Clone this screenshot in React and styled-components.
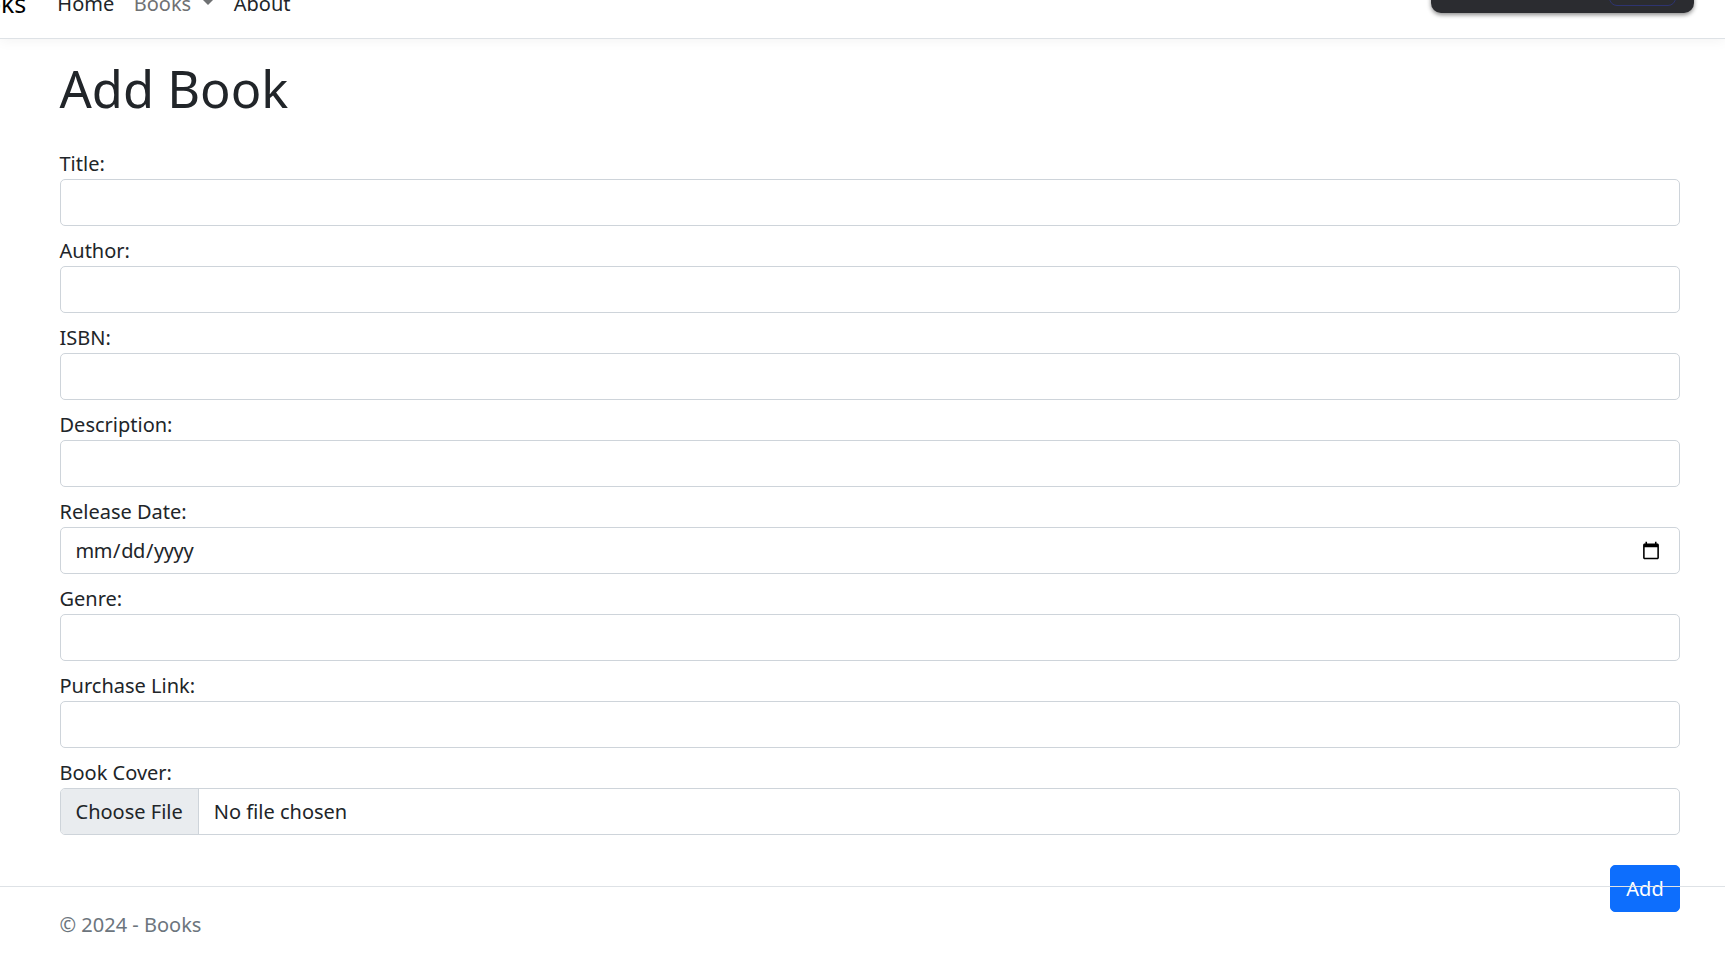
import React from "react";
import styled, { createGlobalStyle } from "styled-components";

const Global = createGlobalStyle`
  html, body { margin: 0; padding: 0; height: 100%; overflow: hidden; background: #fff; }
  body { font-family: "Noto Sans", sans-serif; font-size: 20px; line-height: 30px; color: #212529; }
  * { box-sizing: border-box; }
`;

const Page = styled.div`
  position: relative;
  width: 1725px;
  height: 962px;
  overflow: hidden;
`;

const Navbar = styled.nav`
  height: 39px;
  border-bottom: 1px solid #dee2e6;
  box-shadow: 0 2px 12px rgba(0, 0, 0, 0.05);
  display: flex;
  align-items: flex-end;
  gap: 31px;
  padding-bottom: 19px;
  overflow: hidden;
`;

const Brand = styled.span`
  font-size: 25px;
  line-height: 30px;
  color: #000;
  margin-left: -45.5px;
  margin-bottom: 1px;
  flex: none;
`;

const NavLinks = styled.div`
  display: flex;
  gap: 19.5px;
  align-items: center;
`;

const NavLink = styled.span`
  font-size: 20px;
  line-height: 30px;
  color: ${(p) => (p.$muted ? "#6f7173" : "#212529")};
  display: flex;
  align-items: center;
`;

const Caret = styled.span`
  display: inline-block;
  margin-left: 11px;
  margin-top: -4px;
  border-top: 6px solid #6f7173;
  border-left: 6px solid transparent;
  border-right: 6px solid transparent;
`;

const Overlay = styled.div`
  position: absolute;
  top: -20px;
  left: 1431px;
  width: 263px;
  height: 33px;
  background: #2b2c30;
  border-radius: 10px;
  box-shadow: 0 2px 4px rgba(0, 0, 0, 0.45);
`;

const OverlayButton = styled.div`
  position: absolute;
  right: 18px;
  bottom: 7px;
  width: 67px;
  height: 20px;
  border: 1px solid #2e3470;
  border-radius: 8px;
`;

const Main = styled.main`
  padding: 0 45px 0 59.5px;
`;

const Heading = styled.h1`
  margin: 20px 0 30px;
  font-size: 50.6px;
  line-height: 60px;
  font-weight: 400;
  color: #212529;
`;

const Field = styled.div`
  margin-bottom: 10px;
`;

const Label = styled.label`
  display: block;
  font-size: 20px;
  line-height: 30px;
`;

const Input = styled.input`
  display: block;
  width: 100%;
  height: 47px;
  padding: 7px 15px;
  font: inherit;
  color: #212529;
  background: #fff;
  border: 1px solid #ced4da;
  border-radius: 5px;
  appearance: none;
  outline: none;

  &[type="date"]::-webkit-datetime-edit {
    letter-spacing: -0.4px;
    margin-left: -1px;
  }

  &[type="date"]::-webkit-calendar-picker-indicator {
    width: 20px;
    height: 20px;
    margin: 0 3px 0 0;
    padding: 0;
  }
`;

const FileBox = styled.div`
  display: flex;
  align-items: center;
  height: 47px;
  border: 1px solid #ced4da;
  border-radius: 5px;
  overflow: hidden;
`;

const FileButton = styled.span`
  height: 100%;
  display: flex;
  align-items: center;
  padding: 0 15px;
  background: #e9ecef;
  border-right: 1px solid #ced4da;
`;

const FileName = styled.span`
  padding-left: 15px;
`;

const Actions = styled.div`
  display: flex;
  justify-content: flex-end;
  margin-top: 30px;
  position: relative;
  z-index: 1;
`;

const Submit = styled.button`
  width: 70px;
  height: 47px;
  padding: 0;
  font: inherit;
  color: #fff;
  background: #0d6efd;
  border: 1px solid #0d6efd;
  border-radius: 5px;
`;

const Footer = styled.footer`
  position: absolute;
  left: 0;
  right: 0;
  top: 886px;
  z-index: 2;
  border-top: 1px solid #dee2e6;
  padding: 23px 59.5px 0;
  line-height: 30px;
  color: #6c757d;
  pointer-events: none;
`;

const fields = [
  ["Title:", "text"],
  ["Author:", "text"],
  ["ISBN:", "text"],
  ["Description:", "text"],
  ["Release Date:", "date"],
  ["Genre:", "text"],
  ["Purchase Link:", "text"],
];

export default function App() {
  return (
    <>
      <Global />
      <Page>
        <Navbar>
          <Brand>Books</Brand>
          <NavLinks>
            <NavLink>Home</NavLink>
            <NavLink $muted>
              Books
              <Caret />
            </NavLink>
            <NavLink>About</NavLink>
          </NavLinks>
        </Navbar>
        <Overlay>
          <OverlayButton />
        </Overlay>
        <Main>
          <Heading>Add Book</Heading>
          <form>
            {fields.map(([label, type]) => (
              <Field key={label}>
                <Label>{label}</Label>
                <Input type={type} />
              </Field>
            ))}
            <Field>
              <Label>Book Cover:</Label>
              <FileBox>
                <FileButton>Choose File</FileButton>
                <FileName>No file chosen</FileName>
              </FileBox>
            </Field>
            <Actions>
              <Submit type="button">Add</Submit>
            </Actions>
          </form>
        </Main>
        <Footer>© 2024 - Books</Footer>
      </Page>
    </>
  );
}
